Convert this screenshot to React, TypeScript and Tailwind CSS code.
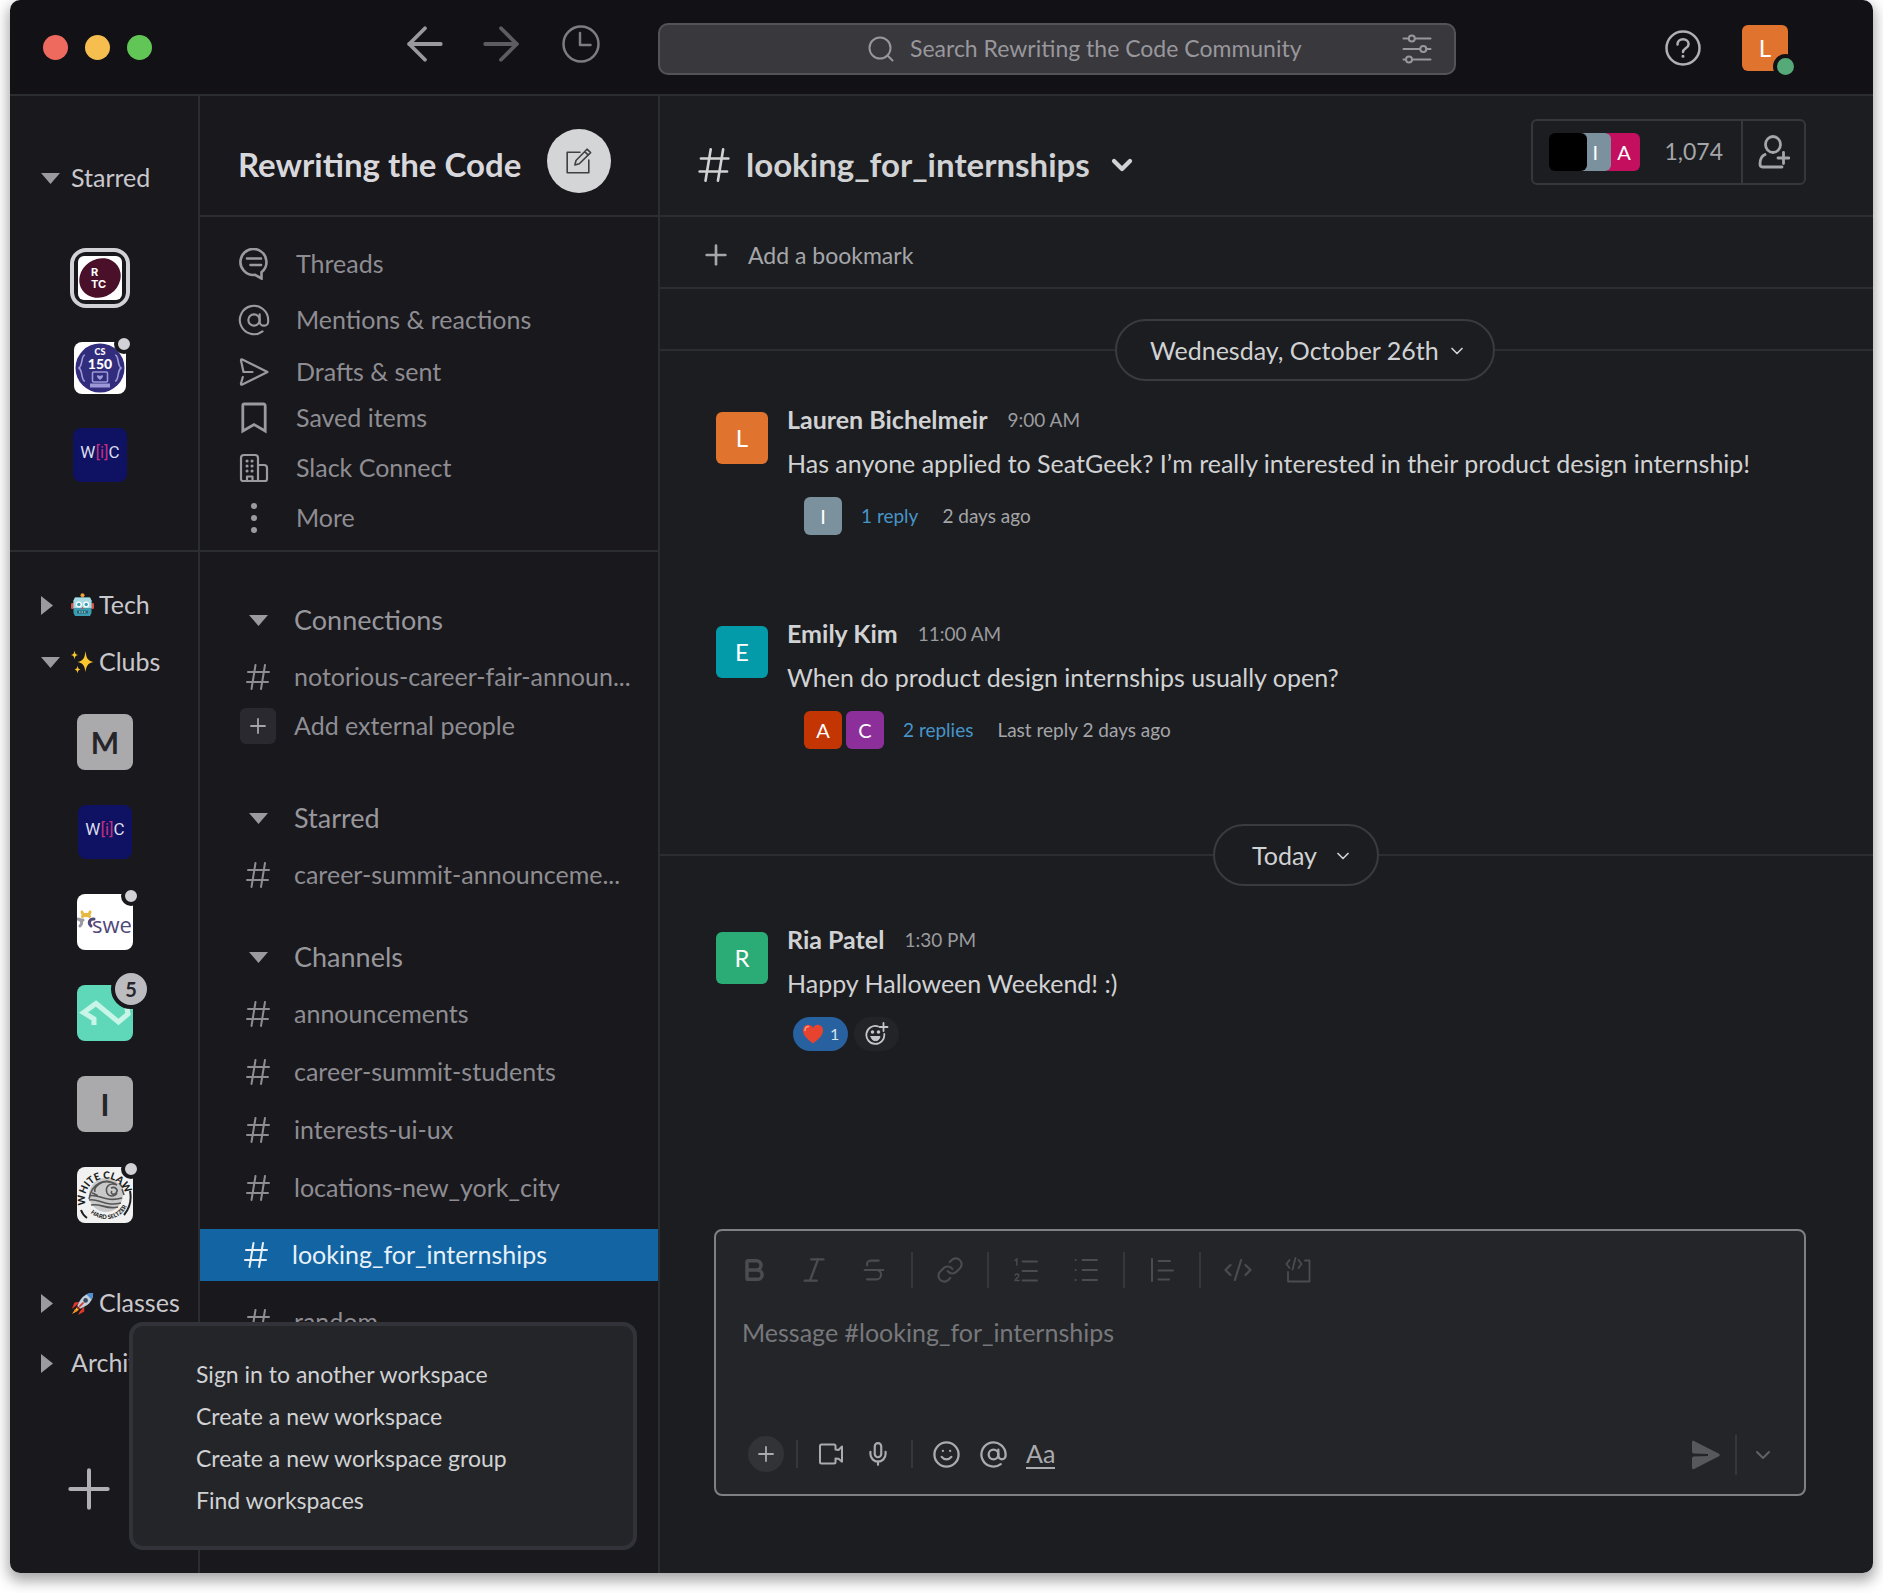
import type { ReactNode } from "react";
import {
  ArrowLeft,
  ArrowRight,
  AtSign,
  Bold,
  ChevronDown,
  CodeXml,
  Italic,
  Link as LinkIcon,
  Mic,
  Plus,
  Smile,
  Strikethrough,
} from "lucide-react";

const HashIcon = ({ className }: { className?: string }) => (
  <svg viewBox="0 0 24 26" className={className} fill="none" stroke="currentColor" strokeWidth="2" strokeLinecap="round">
    <path d="M9.5 1 5.5 25M19 1 15 25M2 8h21M1 18h21" />
  </svg>
);

const Caret = ({ open }: { open?: boolean }) =>
  open ? (
    <svg viewBox="0 0 19 11" className="h-[11px] w-[19px] shrink-0 fill-[#9b9a9f]">
      <path d="M0 0h19L9.5 11z" />
    </svg>
  ) : (
    <svg viewBox="0 0 12 19" className="h-[19px] w-3 shrink-0 fill-[#9b9a9f]">
      <path d="M0 0v19l12-9.500z" />
    </svg>
  );

const ClockIcon = () => (
  <svg viewBox="0 0 38 38" className="size-[38px]" fill="none" stroke="currentColor" strokeWidth="2.500" strokeLinecap="round" strokeLinejoin="round">
    <circle cx="19" cy="19" r="17.500" />
    <path d="M18 8v12h10.500" />
  </svg>
);

const SearchIcon = () => (
  <svg viewBox="0 0 26 26" className="size-[26px] shrink-0" fill="none" stroke="currentColor" strokeWidth="2" strokeLinecap="round">
    <circle cx="12" cy="12" r="10.500" />
    <path d="m19.500 19.500 5 5" />
  </svg>
);

const FilterIcon = () => (
  <svg viewBox="0 0 30 30" className="size-[30px]" fill="none" stroke="currentColor" strokeWidth="2" strokeLinecap="round">
    <path d="M1.500 4.500h5M13 4.500h15.500M1.500 15h16.500M24.500 15h4M1.500 25.500h2M10.500 25.500h18" />
    <circle cx="9.800" cy="4.500" r="3" />
    <circle cx="21.300" cy="15" r="3" />
    <circle cx="7" cy="25.500" r="3" />
  </svg>
);

const HelpIcon = () => (
  <svg viewBox="0 0 36 36" className="size-9" fill="none" stroke="currentColor" strokeWidth="2.500" strokeLinecap="round" strokeLinejoin="round">
    <circle cx="18" cy="18" r="16.500" />
    <path d="M12.500 14.500c0-3.200 2.300-5.200 5.500-5.200s5.600 2 5.600 4.900c0 4-5.600 4.200-5.600 7.800" />
    <circle cx="18" cy="26.300" r=".8" fill="currentColor" strokeWidth="1.500" />
  </svg>
);

const ComposeIcon = () => (
  <svg viewBox="0 0 26 26" className="size-[26px]" fill="none" stroke="#3f4043" strokeWidth="1.600" strokeLinecap="round" strokeLinejoin="round">
    <path d="M14 4.200H1.200v20.600h21.600V12" />
    <path d="m10 12.500 11-11.300 3.600 3.400-11.300 11.200-4.400 1.200zM18.700 3.600l3.600 3.500" />
  </svg>
);

const ThreadsIcon = () => (
  <svg viewBox="0 0 32 32" className="size-8" fill="none" stroke="currentColor" strokeWidth="2.600" strokeLinecap="round" strokeLinejoin="miter">
    <path d="M17 26.900A13 13 0 1 1 23.500 24.200V30.500z" />
    <path d="M9 10.500h14M12.500 17h10.500" />
  </svg>
);

const SendOutlineIcon = () => (
  <svg viewBox="0 0 30 28" className="h-7 w-[30px]" fill="none" stroke="currentColor" strokeWidth="2.200" strokeLinecap="round" strokeLinejoin="round">
    <path d="M4.500 14 2 2.500c-.2-1 .5-1.400 1.300-1L28.500 14 3.300 26.500c-.8.400-1.500 0-1.300-1L3.800 19M4.500 14h9" />
  </svg>
);

const BookmarkIcon = () => (
  <svg viewBox="0 0 26 32" className="h-8 w-[26px]" fill="none" stroke="currentColor" strokeWidth="2.800">
    <path d="M1.800 3.500a1.500 1.500 0 0 1 1.500-1.500h19.400a1.500 1.500 0 0 1 1.500 1.500V29L13 22.500 1.800 29z" />
  </svg>
);

const BuildingIcon = () => (
  <svg viewBox="0 0 30 30" className="size-[30px]" fill="none" stroke="currentColor" strokeWidth="2.200" strokeLinecap="round" strokeLinejoin="round">
    <path d="M2 26V5a3 3 0 0 1 3-3h11a3 3 0 0 1 3 3v23H4a2 2 0 0 1-2-2zM20 12h5a3 3 0 0 1 3 3v11a2 2 0 0 1-2 2h-7M8 28v-4.500h5.500V28" />
    <path d="M8 8h.1M13 8h.1M8 13h.1M13 13h.1M8 18h.1M13 18h.1" strokeWidth="3" />
  </svg>
);

const DotsIcon = () => (
  <svg viewBox="0 0 8 32" className="h-8 w-2" fill="currentColor">
    <circle cx="4" cy="4" r="3" />
    <circle cx="4" cy="16" r="3" />
    <circle cx="4" cy="28" r="3" />
  </svg>
);

const AddUserIcon = () => (
  <svg viewBox="0 0 32 34" className="h-[34px] w-8" fill="none" stroke="currentColor" strokeWidth="2.800" strokeLinecap="round" strokeLinejoin="round">
    <ellipse cx="15" cy="9.500" rx="7.500" ry="8" />
    <path d="M7 19.500c-3.500 1.500-5 5-5 9.500 0 2 .8 3 2.500 3H24M25.500 17.500v11M20 23h11" />
  </svg>
);

const OrderedIcon = () => (
  <svg viewBox="0 0 24 24" className="size-6" fill="none" stroke="currentColor" strokeWidth="1.800" strokeLinecap="round">
    <path d="M8.500 3.500H23M8.500 13H23M8.500 22.500H23" />
    <path d="M1 2.500 2.800 1v6M1 17.200c1-2 4-1.400 3.800.5C4.600 19.500 1 21 1 22.500h4" strokeWidth="1.400" />
  </svg>
);

const BulletIcon = () => (
  <svg viewBox="0 0 24 24" className="size-6" fill="none" stroke="currentColor" strokeWidth="1.800" strokeLinecap="round">
    <path d="M8.500 2H23M8.500 12H23M8.500 22H23M1.500 2h.3M1.500 12h.3M1.500 22h.3" />
  </svg>
);

const QuoteIcon = () => (
  <svg viewBox="0 0 24 24" className="size-6" fill="none" stroke="currentColor" strokeWidth="2" strokeLinecap="round">
    <path d="M2 1v22M8.500 3H20M8.500 12.500H23M8.500 21.500H19" />
  </svg>
);

const CodeBlockIcon = () => (
  <svg viewBox="0 0 26 26" className="size-[26px] shrink-0" fill="none" stroke="currentColor" strokeWidth="1.800" strokeLinecap="round" strokeLinejoin="round">
    <path d="M20 3.500h4.500v21H3V15" />
    <path d="M4.500 3 1.500 7l3 4M13.500 3l3 4-3 4M10.500 1 7.500 12.500" />
  </svg>
);

const VideoIcon = () => (
  <svg viewBox="0 0 26 26" className="size-[26px]" fill="none" stroke="currentColor" strokeWidth="2" strokeLinejoin="round">
    <path d="M17.500 8.500V5a1.500 1.500 0 0 0-1.500-1.500H3.500A1.500 1.500 0 0 0 2 5v16a1.500 1.500 0 0 0 1.500 1.500H16a1.500 1.500 0 0 0 1.500-1.500v-3.500l3 .2 3.500 3V5.500L20.500 9z" />
  </svg>
);

const SendIcon = () => (
  <svg viewBox="0 0 30 30" className="size-[30px]" fill="#57585c">
    <path d="M1 2.200C1 1 2 .5 3 1l25 12.800c1 .6 1 1.800 0 2.400L3 29c-1 .5-2 0-2-1.200v-9.300c0-1 .6-1.800 1.700-2L17 16.100v-2.200L2.700 13.500C1.600 13.300 1 12.500 1 11.500z" />
  </svg>
);

const AddReactionIcon = () => (
  <svg viewBox="0 0 24 24" className="size-6" fill="none" stroke="currentColor" strokeWidth="1.800" strokeLinecap="round">
    <path d="M13 4.300A9 9 0 1 0 19.300 12" />
    <path d="M18.500 1v8M14.500 5h8" />
    <circle cx="7.500" cy="10" r=".9" fill="currentColor" />
    <circle cx="13.500" cy="10" r=".9" fill="currentColor" />
    <path d="M6 14.500h9c-.5 3-2.300 4.200-4.500 4.200S6.500 17.500 6 14.500z" fill="currentColor" strokeWidth="1" />
  </svg>
);

const HeartEmoji = () => (
  <svg viewBox="0 0 22 20" className="h-5 w-[22px]">
    <path d="M11 19.500C5 15 1 11 1 6.500 1 3 3.500.8 6.200.8c2 0 3.800 1 4.800 3 1-2 2.800-3 4.800-3C18.500.8 21 3 21 6.500 21 11 17 15 11 19.500z" fill="#e8432f" />
    <path d="M3 6.500C3 4 4.500 2.500 6.500 2.500" stroke="#f79a84" strokeWidth="1.500" fill="none" strokeLinecap="round" />
  </svg>
);

const RobotEmoji = () => (
  <svg viewBox="0 0 23 24" className="h-6 w-[23px]">
    <circle cx="11.500" cy="2.200" r="2" fill="#f2a33a" />
    <path d="M10.700 3.500h1.600V6h-1.600z" fill="#c9762c" />
    <rect x="0" y="10" width="3" height="6" rx="1.200" fill="#d9534a" />
    <rect x="20" y="10" width="3" height="6" rx="1.200" fill="#d9534a" />
    <path d="M4 4.500h15l1.500 3V20L19 23H4l-1.500-3V7.500z" fill="#3d9db0" />
    <path d="M4 4.500h15l1.500 3V15h-18V7.500z" fill="#a9dbe4" />
    <circle cx="7.800" cy="11.500" r="3" fill="#fff" />
    <circle cx="15.200" cy="11.500" r="3" fill="#fff" />
    <circle cx="7.800" cy="11.500" r="1.700" fill="#3aa0b8" />
    <circle cx="15.200" cy="11.500" r="1.700" fill="#3aa0b8" />
    <path d="m11.500 13.500 1.200 2.500h-2.400z" fill="#c8493d" />
    <rect x="6" y="17.500" width="11" height="3" rx="1" fill="#1d6473" />
    <path d="M8 19h7" stroke="#dff3f6" strokeDasharray="1.500 1" />
  </svg>
);

const SparklesEmoji = () => (
  <svg viewBox="0 0 23 24" className="h-6 w-[23px]" fill="#fbc62d">
    <path d="M14.500 1c1 7.500 2 9.500 8 11-6 1.500-7 3.500-8 10-1-6.500-2-8.500-8-10 6-1.500 7-3.500 8-11z" />
    <path d="M3.500.5C4 3.500 4.500 4.500 7 5c-2.500.5-3 1.500-3.500 4.500C3 6.500 2.500 5.500 0 5c2.500-.5 3-1.500 3.500-4.500zM6.500 15.500c.5 3 1 3.500 3 4-2 .5-2.500 1-3 4-.5-3-1-3.500-3-4 2-.5 2.500-1 3-4z" />
  </svg>
);

const RocketEmoji = () => (
  <svg viewBox="0 0 26 26" className="size-[23px]">
    <path d="M7 17 1 25l8-5z" fill="#fbc62d" />
    <path d="m4 17-3 2 3-7 6-1zM10 22l-2 4 7-4v-6z" fill="#e2382b" />
    <path d="m4.500 19-2 5 5-2.500z" fill="#f58a1f" />
    <path d="M25 1c-7 0-11 3-14.500 8L7 15.500 10.500 19l6.500-3.500C22 12 25 8 25 1z" fill="#c3cfda" />
    <path d="M25 1c-3 0-5.500.5-7.700 1.600l6 6C24.500 6.500 25 4 25 1z" fill="#4b8fd0" />
    <path d="m7 15.500 3.500 3.500-2 1L6 17.500z" fill="#9b2a23" />
    <circle cx="16.500" cy="9.500" r="2.600" fill="#33475c" />
    <path d="m10 16 3.500-3.500" stroke="#d53a2d" strokeWidth="2" strokeLinecap="round" />
  </svg>
);

const RtcLogo = () => (
  <svg viewBox="0 0 44 44" className="size-11 rounded-md bg-white" fontFamily="Inter, sans-serif" fontWeight="700" fill="#fff">
    <ellipse cx="22" cy="22" rx="21.500" ry="19" fill="#4a1029" transform="rotate(-35 22 22)" />
    <text x="13" y="20" fontSize="11">R</text>
    <text x="13" y="32" fontSize="11">TC</text>
  </svg>
);

const CsLogo = () => (
  <svg viewBox="0 0 52 52" className="size-[52px] rounded-lg bg-white" fontFamily="Lato, sans-serif" fontWeight="900" fill="#fff" textAnchor="middle">
    <circle cx="26" cy="26" r="24.500" fill="#322c7c" />
    <text x="26" y="13" fontSize="9">CS</text>
    <text x="26" y="27" fontSize="14">150</text>
    <g fill="none" stroke="#9d99d8" strokeWidth="1.600">
      <path d="M11 13c-4 0-2 10-6 13 4 3 2 13 6 13M41 13c4 0 2 10 6 13-4 3-2 13-6 13" />
      <rect x="18.500" y="30" width="15" height="10" rx="1" />
      <path d="M16 43.500h20" strokeWidth="4" />
    </g>
    <path d="M26 38c-5-3.500-3-6 0-4 3-2 5 .5 0 4z" fill="#9d99d8" />
  </svg>
);

const WicLogo = () => (
  <div className="flex size-[54px] items-center justify-center rounded-lg bg-[#0f1163] pb-1 font-[Roboto] text-[17px] text-[#dcdcec]">
    W<span className="text-[#c0307f]">[i]</span>C
  </div>
);

const SweLogo = () => (
  <svg viewBox="0 0 56 56" className="size-14 rounded-lg bg-white">
    <g fill="none" strokeWidth="3" strokeLinecap="round">
      <path d="M5 18c1 5 7 5 8 0M5.500 22.500c1-3 6-3 7 0" stroke="#e4b944" />
      <path d="M0 25c5 0 6 4 3 7M3 26h3" stroke="#9a98a0" />
      <path d="M17 25c-5 0-6 4-3 7" stroke="#4f4878" />
    </g>
    <text x="15" y="39" fontFamily="Open Sans, sans-serif" fontSize="22" fontWeight="500" fill="#4f4878">swe</text>
  </svg>
);

const WaveLogo = () => (
  <svg viewBox="0 0 56 56" className="size-14 rounded-lg bg-[#5fd8ba]">
    <path d="M17 40V34L6.500 27.500 19 18.500l22.500 18.500L51 29l-1-6" fill="none" stroke="#c8f5e8" strokeWidth="5" />
  </svg>
);

const ClawLogo = () => (
  <svg viewBox="0 0 56 56" className="size-14 rounded-lg bg-[#f1f1f1]" fontFamily="Lato, sans-serif" fontWeight="900" fill="#1d1d1d">
    <defs>
      <path id="claw-top" d="M9 38A20 20 0 1 1 48 26" />
      <path id="claw-bottom" d="M11 43A23 23 0 0 0 51 37" />
    </defs>
    <circle cx="29" cy="28" r="17" fill="#c9c9c9" />
    <g fill="none" stroke="#555" strokeWidth="1.600">
      <path d="M12 32c3-16 16-22 28-14-8-3-12 2-10 8 2 4 8 4 10 0" />
      <path d="M12 33c10-2 15 7 32 3M14 38c10-2 15 5 27 2M12 29c9-3 16 7 33 2M18 25c-2-6 8-12 15-10M15 26c2 0 4 2 6 3" />
      <path d="M34 21c4-2 8 2 5 5s-6 0-4-2M42 16l4 5M45 22l2 6" />
      <path d="M4 43c1 3 3 6 6 8M53 24c2 10-1 18-6 24" stroke="#222" strokeWidth="2" />
    </g>
    <text fontSize="10">
      <textPath href="#claw-top">WHITE CLAW</textPath>
    </text>
    <text fontSize="6">
      <textPath href="#claw-bottom" startOffset="4">HARD SELTZER</textPath>
    </text>
  </svg>
);

const LetterLogo = ({ letter }: { letter: string }) => (
  <div className="flex size-14 items-center justify-center rounded-lg bg-[#aaa9ac] text-3xl font-bold text-[#26262a]">{letter}</div>
);

function Workspace({ label, unread, count, children }: { label: string; unread?: boolean; count?: number; children: ReactNode }) {
  return (
    <button aria-label={label} className="relative block">
      {children}
      {unread && <span className="absolute -top-2 -right-2 size-5 rounded-full border-4 border-[#19181d] bg-[#d2d1d6]" />}
      {count && (
        <span className="absolute -top-4 -right-[18px] flex size-10 items-center justify-center rounded-full border-4 border-[#19181d] bg-[#bcbbc0] text-xl font-bold text-[#26262a]">
          {count}
        </span>
      )}
    </button>
  );
}

function RailGroup({ open, emoji, children }: { open?: boolean; emoji?: ReactNode; children: ReactNode }) {
  return (
    <button className="flex h-10 items-center pl-[31px] text-[25px] text-[#c9c8cd]">
      <span className="w-[26px] shrink-0">
        <Caret open={open} />
      </span>
      <span className="flex items-center gap-[5px] pl-1">
        {emoji}
        {children}
      </span>
    </button>
  );
}

const navItems = [
  { label: "Threads", height: "h-14", icon: <ThreadsIcon /> },
  { label: "Mentions & reactions", height: "h-14", icon: <AtSign className="size-[34px] shrink-0" strokeWidth={1.5} /> },
  { label: "Drafts & sent", height: "h-12", icon: <SendOutlineIcon /> },
  { label: "Saved items", height: "h-11", icon: <BookmarkIcon /> },
  { label: "Slack Connect", height: "h-14", icon: <BuildingIcon /> },
  { label: "More", height: "h-11", icon: <DotsIcon /> },
];

const workspaceMenu = [
  "Sign in to another workspace",
  "Create a new workspace",
  "Create a new workspace group",
  "Find workspaces",
];

function SectionTitle({ children }: { children: ReactNode }) {
  return (
    <button className="flex h-14 w-full items-center gap-[18px] pl-10 text-[27px] text-[#98979c]">
      <span className="flex w-9 justify-center">
        <Caret open />
      </span>
      {children}
    </button>
  );
}

function Channel({ name, active }: { name: string; active?: boolean }) {
  return (
    <a
      href="#"
      className={
        active
          ? "my-3 flex h-[52px] items-center gap-[18px] bg-[#1264a3] pl-[38px] text-[25px] text-[#e8f1f8]"
          : "flex h-[58px] items-center gap-[18px] pl-10 text-[25px] text-[#8e8d92]"
      }
    >
      <span className="flex w-9 shrink-0 justify-center">
        <HashIcon className="h-[26px] w-6" />
      </span>
      <span className="whitespace-nowrap">{name}</span>
    </a>
  );
}

function DateDivider({ lead, children }: { lead: string; children: ReactNode }) {
  return (
    <div className="flex items-center">
      <div className={`${lead} h-0.5 shrink-0 bg-[#2c2d31]`} />
      {children}
      <div className="h-0.5 flex-1 bg-[#2c2d31]" />
    </div>
  );
}

type MessageProps = {
  initial: string;
  color: string;
  name: string;
  time: string;
  text: string;
  children: ReactNode;
};

function Message({ initial, color, name, time, text, children }: MessageProps) {
  return (
    <article className="flex gap-[19px] pr-[66px] pl-14">
      <div className={`${color} mt-2 flex size-[52px] shrink-0 items-center justify-center rounded-md text-2xl text-white`}>{initial}</div>
      <div>
        <div className="flex h-8 items-center gap-5">
          <span className="text-[25px] font-bold text-[#d1d2d3]">{name}</span>
          <time className="text-[19px] text-[#9a9b9e]">{time}</time>
        </div>
        <p className="mt-[9px] text-[25px] leading-9 text-[#d1d2d3]">{text}</p>
        {children}
      </div>
    </article>
  );
}

function Replies({ people, link, last }: { people: { initial: string; color: string }[]; link: string; last: string }) {
  return (
    <div className="mt-4 flex items-center pl-[17px] text-[19px]">
      <div className="flex gap-1">
        {people.map((p) => (
          <span key={p.initial} className={`${p.color} flex size-[38px] items-center justify-center rounded-md text-xl text-white`}>
            {p.initial}
          </span>
        ))}
      </div>
      <a href="#" className="pl-[19px] text-[#4795c8]">
        {link}
      </a>
      <span className="pl-6 text-[#a5a6a9]">{last}</span>
    </div>
  );
}

const Divider = ({ className = "h-9" }: { className?: string }) => <span className={`${className} w-0.5 shrink-0 bg-[#36373b]`} />;

function Tool({ label, children }: { label: string; children: ReactNode }) {
  return (
    <button type="button" aria-label={label} className="flex size-7 shrink-0 items-center justify-center">
      {children}
    </button>
  );
}

function TopBar() {
  return (
    <header className="flex h-24 items-center border-b-2 border-[#2c2d31] bg-[#121116] pt-1">
      <div className="flex w-[648px] shrink-0 items-center justify-between pr-[58px] pb-1 pl-[33px]">
        <div className="flex gap-[17px]">
          <span className="size-[25px] rounded-full bg-[#ee6a5f]" />
          <span className="size-[25px] rounded-full bg-[#f5be4f]" />
          <span className="size-[25px] rounded-full bg-[#61c655]" />
        </div>
        <nav className="flex items-center pb-1.5 text-[#9a999e]">
          <button aria-label="Back" className="mr-[22px]">
            <ArrowLeft className="size-[54px]" strokeWidth={1.7} />
          </button>
          <button aria-label="Forward" className="mr-[34px] text-[#5d5c61]">
            <ArrowRight className="size-[54px]" strokeWidth={1.7} />
          </button>
          <button aria-label="History" className="text-[#7d7c81]">
            <ClockIcon />
          </button>
        </nav>
      </div>
      <label className="flex h-[52px] flex-1 items-center rounded-[10px] border-2 border-[#545358] bg-[#39383d] pr-[22px] pl-52 text-[#98979c]">
        <SearchIcon />
        <input
          type="search"
          aria-label="Search"
          placeholder="Search Rewriting the Code Community"
          className="ml-4 min-w-0 flex-1 bg-transparent pb-0.5 text-[23px] outline-none placeholder:text-[#98979c]"
        />
        <button aria-label="Filters">
          <FilterIcon />
        </button>
      </label>
      <div className="flex w-[417px] shrink-0 items-center justify-end gap-[41px] pr-[85px] pb-0.5">
        <button aria-label="Help" className="text-[#b0afb4]">
          <HelpIcon />
        </button>
        <button aria-label="Profile" className="relative flex size-[46px] items-center justify-center rounded-md bg-[#e0742f] text-2xl text-white">
          L
          <span className="absolute -right-2.5 -bottom-2 size-[25px] rounded-full border-4 border-[#121116] bg-[#56a978]" />
        </button>
      </div>
    </header>
  );
}

function Rail() {
  return (
    <aside className="w-[190px] shrink-0 border-r-2 border-[#2c2d31] bg-[#19181d]">
      <div className="h-[456px] border-b-2 border-[#2c2d31] pt-[62px]">
        <RailGroup open>Starred</RailGroup>
        <div className="mt-[50px] flex flex-col items-center gap-[34px] pr-2">
          <button aria-label="Rewriting the Code" className="flex size-[60px] items-center justify-center rounded-2xl border-4 border-[#d2d1d6]">
            <RtcLogo />
          </button>
          <Workspace label="CS 150" unread>
            <CsLogo />
          </Workspace>
          <Workspace label="Women in Computing">
            <WicLogo />
          </Workspace>
        </div>
      </div>
      <div className="pt-[33px]">
        <RailGroup emoji={<RobotEmoji />}>Tech</RailGroup>
        <div className="h-[17px]" />
        <RailGroup open emoji={<SparklesEmoji />}>
          Clubs
        </RailGroup>
        <div className="mt-8 flex flex-col items-center gap-[35px] pl-0.5">
          <Workspace label="M workspace">
            <LetterLogo letter="M" />
          </Workspace>
          <Workspace label="Women in Computing">
            <WicLogo />
          </Workspace>
          <Workspace label="SWE" unread>
            <SweLogo />
          </Workspace>
          <Workspace label="Wave" count={5}>
            <WaveLogo />
          </Workspace>
          <Workspace label="I workspace">
            <LetterLogo letter="I" />
          </Workspace>
          <Workspace label="White Claw" unread>
            <ClawLogo />
          </Workspace>
        </div>
        <div className="mt-[60px] space-y-5">
          <RailGroup emoji={<RocketEmoji />}>Classes</RailGroup>
          <RailGroup>Archive</RailGroup>
        </div>
        <button aria-label="Add workspace" className="mt-[74px] ml-[47px] block text-[#b0afb4]">
          <Plus className="size-16" strokeWidth={1.5} />
        </button>
      </div>
    </aside>
  );
}

function Sidebar() {
  return (
    <aside className="w-[460px] shrink-0 border-r-2 border-[#2c2d31] bg-[#19181d]">
      <div className="flex h-[121px] items-center gap-[26px] border-b-2 border-[#2c2d31] pt-[18px] pl-[38px]">
        <h1 className="text-[33px] font-bold text-[#d8d7dc]">Rewriting the Code</h1>
        <div className="pb-2">
          <button aria-label="New message" className="flex size-16 items-center justify-center rounded-full bg-[#d3d5d6]">
            <ComposeIcon />
          </button>
        </div>
      </div>
      <nav className="h-[335px] border-b-2 border-[#2c2d31] pt-[19px] pl-9 text-[25px] text-[#8e8d92]">
        {navItems.map((item) => (
          <a key={item.label} href="#" className={`${item.height} flex items-center gap-6`}>
            <span className="flex w-9 justify-center text-[#9b9a9f]">{item.icon}</span>
            {item.label}
          </a>
        ))}
      </nav>
      <div className="pt-10">
        <SectionTitle>Connections</SectionTitle>
        <Channel name="notorious-career-fair-announ..." />
        <button className="flex h-10 w-full items-center gap-[18px] pl-10 text-[25px] text-[#8e8d92]">
          <span className="flex size-9 items-center justify-center rounded-md bg-[#2a292f]">
            <Plus className="size-6 text-[#a5a4a9]" strokeWidth={1.8} />
          </span>
          Add external people
        </button>
      </div>
      <div className="pt-11">
        <SectionTitle>Starred</SectionTitle>
        <Channel name="career-summit-announceme..." />
      </div>
      <div className="pt-[25px]">
        <SectionTitle>Channels</SectionTitle>
        <Channel name="announcements" />
        <Channel name="career-summit-students" />
        <Channel name="interests-ui-ux" />
        <Channel name="locations-new_york_city" />
        <Channel name="looking_for_internships" active />
        <Channel name="random" />
      </div>
    </aside>
  );
}

function Composer() {
  return (
    <form className="mr-[67px] mb-[77px] ml-[54px] rounded-lg border-2 border-[#7f8084] bg-[#242529] pt-[21px] pb-3">
      <div className="flex items-center gap-[23px] pl-6 text-[#4b4c50]">
        <div className="flex gap-8">
          <Tool label="Bold">
            <Bold className="size-7" strokeWidth={3} />
          </Tool>
          <Tool label="Italic">
            <Italic className="size-8 shrink-0" strokeWidth={1.8} />
          </Tool>
          <Tool label="Strikethrough">
            <Strikethrough className="size-7" strokeWidth={1.8} />
          </Tool>
        </div>
        <Divider />
        <Tool label="Link">
          <LinkIcon className="size-7" strokeWidth={1.8} />
        </Tool>
        <Divider />
        <div className="flex gap-8">
          <Tool label="Ordered list">
            <OrderedIcon />
          </Tool>
          <Tool label="Bulleted list">
            <BulletIcon />
          </Tool>
        </div>
        <Divider />
        <Tool label="Quote">
          <QuoteIcon />
        </Tool>
        <Divider />
        <div className="flex gap-8">
          <Tool label="Code">
            <CodeXml className="size-[30px] shrink-0" strokeWidth={1.7} />
          </Tool>
          <Tool label="Code block">
            <CodeBlockIcon />
          </Tool>
        </div>
      </div>
      <textarea
        aria-label="Message"
        placeholder="Message #looking_for_internships"
        className="mt-[26px] block h-28 w-full resize-none bg-transparent px-[26px] text-[25px] leading-9 text-[#d1d2d3] outline-none placeholder:text-[#77787b]"
      />
      <div className="flex h-14 items-center pr-[29px] pl-8 text-[#aaabae]">
        <button type="button" aria-label="Attach" className="flex size-9 items-center justify-center rounded-full bg-[#323337]">
          <Plus className="size-6" strokeWidth={1.8} />
        </button>
        <div className="ml-3 flex items-center gap-[19px]">
          <Divider className="h-7" />
          <Tool label="Video clip">
            <VideoIcon />
          </Tool>
          <Tool label="Audio clip">
            <Mic className="size-[26px]" strokeWidth={2} />
          </Tool>
          <Divider className="h-7" />
          <Tool label="Emoji">
            <Smile className="size-[29px] shrink-0" strokeWidth={1.9} />
          </Tool>
          <Tool label="Mention">
            <AtSign className="size-[29px] shrink-0" strokeWidth={1.9} />
          </Tool>
          <button type="button" aria-label="Formatting" className="border-b-2 border-[#aaabae] text-[25px] leading-7">
            Aa
          </button>
        </div>
        <div className="ml-auto flex items-center gap-[14px] pt-0.5">
          <button aria-label="Send">
            <SendIcon />
          </button>
          <Divider className="h-10" />
          <button type="button" aria-label="Send options" className="text-[#606165]">
            <ChevronDown className="size-6" strokeWidth={2} />
          </button>
        </div>
      </div>
    </form>
  );
}

function ChannelView() {
  return (
    <main className="flex min-w-0 flex-1 flex-col bg-[#1c1d21]">
      <div className="flex h-[121px] items-center justify-between border-b-2 border-[#2c2d31] pr-[67px] pl-[38px]">
        <button className="flex items-center gap-4 pt-[18px] text-[#d1d2d3]">
          <HashIcon className="h-[34px] w-8" />
          <span className="text-[33px] font-bold">looking_for_internships</span>
          <ChevronDown className="size-8" strokeWidth={3.2} />
        </button>
        <div className="mb-2 flex h-[66px] items-stretch rounded-md border-2 border-[#36373b] text-[#a5a6a9]">
          <button className="flex items-center pr-[18px] pl-4">
            <span className="z-20 size-[38px] rounded-md bg-black" />
            <span className="z-10 -ml-2 flex h-[38px] w-8 items-center justify-center rounded-r-md bg-[#7b929e] text-xl text-white">I</span>
            <span className="-ml-2 flex h-[38px] w-[37px] items-center justify-center rounded-md bg-[#c40f5f] pl-1 text-xl text-white">A</span>
            <span className="ml-6 text-[23px]">1,074</span>
          </button>
          <button aria-label="Add people" className="flex w-[63px] items-center justify-center border-l-2 border-[#36373b]">
            <AddUserIcon />
          </button>
        </div>
      </div>
      <button className="flex h-[72px] items-center gap-4 border-b-2 border-[#2c2d31] pt-1.5 pl-10 text-[23px] text-[#a5a6a9]">
        <Plus className="size-8" strokeWidth={2} />
        Add a bookmark
      </button>

      <div className="flex-1 pt-[30px]">
        <DateDivider lead="w-[455px]">
          <button className="flex h-[62px] items-center gap-2 rounded-full border-2 border-[#3a3b3f] pt-0.5 pr-[26px] pl-[33px] text-[25px] whitespace-nowrap text-[#d1d2d3]">
            Wednesday, October 26th
            <ChevronDown className="size-5" strokeWidth={2} />
          </button>
        </DateDivider>
        <div className="mt-[23px] space-y-[83px]">
          <Message
            initial="L"
            color="bg-[#e0742f]"
            name="Lauren Bichelmeir"
            time="9:00 AM"
            text="Has anyone applied to SeatGeek? I’m really interested in their product design internship!"
          >
            <Replies people={[{ initial: "I", color: "bg-[#7b929e]" }]} link="1 reply" last="2 days ago" />
          </Message>
          <Message initial="E" color="bg-[#039ba9]" name="Emily Kim" time="11:00 AM" text="When do product design internships usually open?">
            <Replies
              people={[
                { initial: "A", color: "bg-[#c33502]" },
                { initial: "C", color: "bg-[#8d2f9a]" },
              ]}
              link="2 replies"
              last="Last reply 2 days ago"
            />
          </Message>
        </div>
        <div className="mt-[75px] mb-[38px]">
          <DateDivider lead="w-[553px]">
            <button className="flex h-[62px] items-center gap-4 rounded-full border-2 border-[#3a3b3f] pt-0.5 pr-6 pl-[37px] text-[25px] text-[#d1d2d3]">
              Today
              <ChevronDown className="size-5" strokeWidth={2} />
            </button>
          </DateDivider>
        </div>
        <Message initial="R" color="bg-[#2bac76]" name="Ria Patel" time="1:30 PM" text="Happy Halloween Weekend! :)">
          <div className="mt-4 flex gap-1.5 pl-1.5">
            <button className="flex h-[34px] items-center gap-1.5 rounded-full bg-[#2761a0] px-[9px] text-base text-[#d5e3f2]">
              <HeartEmoji />1
            </button>
            <button aria-label="Add reaction" className="flex h-[34px] w-[45px] items-center justify-center rounded-full bg-[#232428] text-[#c5c6c8]">
              <AddReactionIcon />
            </button>
          </div>
        </Message>
      </div>
      <Composer />
    </main>
  );
}

export default function App() {
  return (
    <div className="flex min-h-screen bg-white px-2.5 pb-5 font-[Lato,sans-serif]">
      <div className="relative flex flex-1 flex-col overflow-hidden rounded-[10px] shadow-[0_6px_14px_2px_rgba(0,0,0,0.35)]">
        <TopBar />
        <div className="flex flex-1">
          <Rail />
          <Sidebar />
          <ChannelView />
        </div>
        <div className="absolute bottom-[23px] left-[119px] flex h-[228px] w-[508px] flex-col items-start rounded-[14px] border-4 border-[#323338] bg-[#242529] pt-[27px] pl-[63px]">
          {workspaceMenu.map((item) => (
            <button key={item} className="h-[42px] text-[23px] text-[#d1d2d3]">
              {item}
            </button>
          ))}
        </div>
      </div>
    </div>
  );
}
